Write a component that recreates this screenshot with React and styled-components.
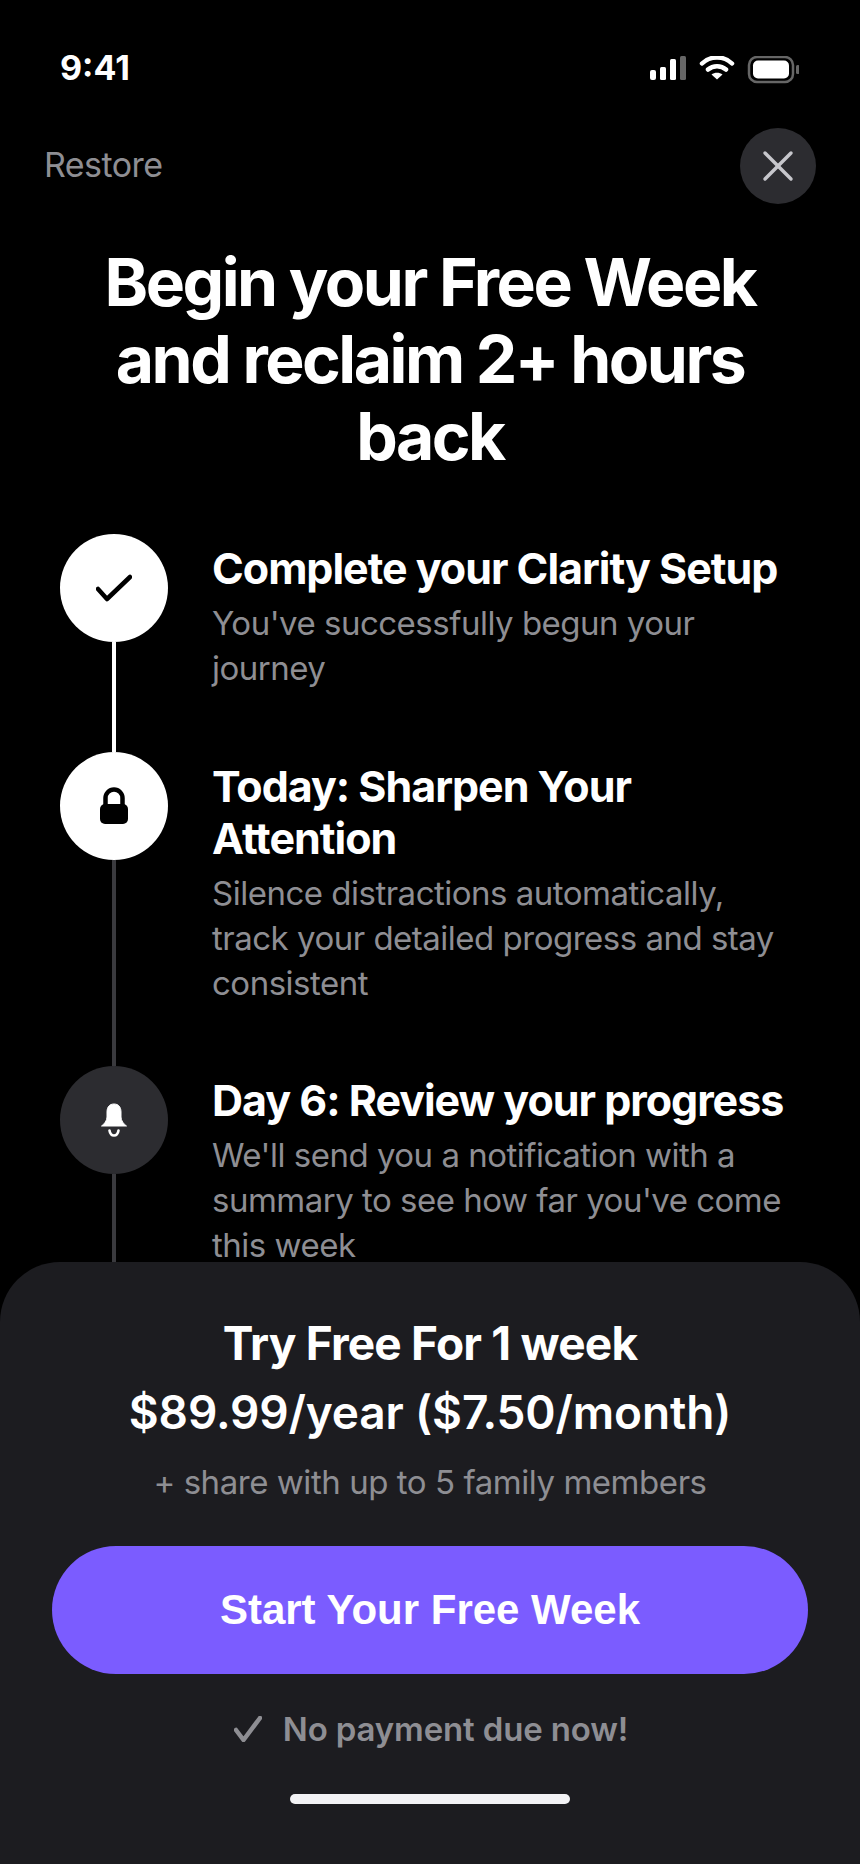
import React from "react";
import styled, { createGlobalStyle } from "styled-components";
import { X } from "lucide-react";

const Global = createGlobalStyle`
  html, body { margin: 0; padding: 0; background: #000; }
  * { box-sizing: border-box; }
`;
const Page = styled.div`
  position: relative; width: 860px; height: 1864px; overflow: hidden;
  background: #000; font-family: Inter, "Liberation Sans", sans-serif; color: #fff;
`;
const StatusBar = styled.div`
  height: 128px; padding: 48px 61px 0 60px; display: flex; justify-content: space-between; align-items: flex-start;
`;
const Time = styled.div`font-size: 34px; font-weight: 700; line-height: 40px; letter-spacing: 0;`;
const StatusIcons = styled.svg`margin-top: 8px; display: block;`;
const TopBar = styled.div`
  display: flex; justify-content: space-between; align-items: center; padding: 0 44px;
`;
const Restore = styled.div`font-size: 34px; line-height: 40px; color: #8e8e93; letter-spacing: -0.55px; margin-top: -2px;`;
const Close = styled.div`
  width: 76px; height: 76px; border-radius: 50%; background: #2c2c30; color: #c7c7cc;
  display: flex; align-items: center; justify-content: center;
`;
const Heading = styled.h1`
  margin: 40px 0 0; padding: 0 40px; text-align: center;
  font-size: 66px; line-height: 77px; font-weight: 700; letter-spacing: -2.5px;
`;
const Timeline = styled.div`margin-top: 59px; padding: 0 60px; display: flex; flex-direction: column;`;
const Step = styled.div`display: flex; gap: 44px;`;
const Rail = styled.div`width: 108px; flex: none; display: flex; flex-direction: column; align-items: center;`;
const Dot = styled.div`
  width: 108px; height: 108px; border-radius: 50%; flex: none;
  background: ${p => (p.$active ? "#fff" : "#2c2c30")};
  color: ${p => (p.$active ? "#000" : "#fff")};
  display: flex; align-items: center; justify-content: center;
`;
const Line = styled.div`flex: 1; width: 4px; background: ${p => (p.$active ? "#fff" : "#3a3a3e")};`;
const Body = styled.div`flex: 1; padding: 8px 0 60.5px;`;
const Title = styled.div`font-size: 43px; line-height: 52px; font-weight: 700; letter-spacing: -1.02px; white-space: nowrap;`;
const Desc = styled.div`font-size: 33px; line-height: 45px; color: #8e8e93; margin-top: 7px; letter-spacing: -0.5px; white-space: nowrap;`;
const Sheet = styled.div`
  position: absolute; left: 0; right: 0; bottom: 0; height: 602px;
  background: #1c1c20; border-radius: 60px 60px 0 0;
  display: flex; flex-direction: column; align-items: center; padding: 51px 52px 0;
`;
const Offer = styled.div`font-size: 46px; line-height: 60px; font-weight: 700; letter-spacing: -0.8px;`;
const Price = styled.div`font-size: 46px; line-height: 60px; font-weight: 600; margin-top: 9px; letter-spacing: -0.15px;`;
const Note = styled.div`font-size: 33px; line-height: 44px; color: #8e8e93; margin-top: 18px; letter-spacing: -0.45px;`;
const Cta = styled.div`
  width: 756px; height: 128px; margin-top: 42px; border-radius: 64px; background: #7b5cff;
  display: flex; align-items: center; justify-content: center;
  font-family: "Liberation Sans", Arial, sans-serif; font-size: 42px; font-weight: 700;
`;
const Reassure = styled.div`
  margin-top: 33px; margin-left: 2px; display: flex; align-items: center; gap: 21px;
  font-size: 33px; line-height: 44px; font-weight: 600; color: #8e8e93; letter-spacing: -0.15px;
`;
const HomeBar = styled.div`width: 280px; height: 10px; border-radius: 5px; background: #f2f2f5; margin-top: 43px;`;

const steps = [
  { title: "Complete your Clarity Setup", desc: <>You've successfully begun your<br />journey</>, active: true, line: true,
    icon: <svg width="36" height="28" viewBox="0 0 36 28" fill="none"><path d="M2 15l9 10L34 3" stroke="currentColor" strokeWidth="4.5" strokeLinecap="round" strokeLinejoin="round" /></svg> },
  { title: <>Today: Sharpen Your<br />Attention</>, desc: <>Silence distractions automatically,<br />track your detailed progress and stay<br />consistent</>, active: true, line: false,
    icon: <svg width="30" height="38" viewBox="0 0 30 38"><path d="M6.500 18V11a8.500 8.500 0 0 1 17 0v7" fill="none" stroke="currentColor" strokeWidth="4.5" /><rect x="1" y="17" width="28" height="20" rx="5" fill="currentColor" /></svg> },
  { title: "Day 6: Review your progress", desc: <>We'll send you a notification with a<br />summary to see how far you've come<br />this week</>, active: false, line: false,
    icon: <svg width="28" height="36" viewBox="0 0 28 36" fill="none"><path d="M14 2c-4.500 0-7 3-7 8v5c0 3.500-2.500 7-5.500 9h25c-3-2-5.500-5.500-5.500-9v-5c0-5-2.500-8-7-8z" fill="currentColor" stroke="currentColor" strokeWidth="1" strokeLinejoin="round" /><path d="M9.500 28.500c.5 3 2.200 5 4.500 5s4-2 4.500-5" stroke="currentColor" strokeWidth="2.600" strokeLinecap="round" /></svg> },
];

export default function App() {
  return (
    <Page>
      <Global />
      <StatusBar>
        <Time>9:41</Time>
        <StatusIcons width="149" height="28" viewBox="0 0 149 28">
          <rect x="0" y="14" width="6" height="10" rx="2" fill="#fff" />
          <rect x="10" y="11" width="6" height="13" rx="1.500" fill="#fff" />
          <rect x="20" y="3" width="6" height="21" rx="1.500" fill="#fff" />
          <rect x="30" y="0" width="6" height="24" rx="1.500" fill="#666" />
          <path d="M52 7.500C60 -.5 74 -.5 82 7.500M58 13.500C63 9 71 9 76 13.500" fill="none" stroke="#fff" strokeWidth="4.500" strokeLinecap="round" />
          <path d="M61.500 18.500L67 23.500l5.500-5c-3-2.500-8-2.500-11 0z" fill="#fff" />
          <rect x="99" y="1" width="44" height="25" rx="8" fill="none" stroke="#666" strokeWidth="2.500" />
          <rect x="103" y="4.500" width="36" height="18" rx="5" fill="#fff" />
          <rect x="146" y="9" width="3.500" height="9" rx="1.500" fill="#666" />
        </StatusIcons>
      </StatusBar>
      <TopBar>
        <Restore>Restore</Restore>
        <Close><X size={52} strokeWidth={1.6} /></Close>
      </TopBar>
      <Heading>Begin your Free Week<br />and reclaim 2+ hours<br />back</Heading>
      <Timeline>
        {steps.map((s, i) => (
          <Step key={i}>
            <Rail>
              <Dot $active={s.active}>{s.icon}</Dot>
              <Line $active={s.line} />
            </Rail>
            <Body>
              <Title>{s.title}</Title>
              <Desc>{s.desc}</Desc>
            </Body>
          </Step>
        ))}
      </Timeline>
      <Sheet>
        <Offer>Try Free For 1 week</Offer>
        <Price>$89.99/year ($7.50/month)</Price>
        <Note>+ share with up to 5 family members</Note>
        <Cta>Start Your Free Week</Cta>
        <Reassure>
          <svg width="28" height="26" viewBox="0 0 28 26" fill="none"><path d="M2 14l7.500 10L26 2" stroke="currentColor" strokeWidth="4.5" strokeLinecap="round" strokeLinejoin="round" /></svg>
          No payment due now!
        </Reassure>
        <HomeBar />
      </Sheet>
    </Page>
  );
}
